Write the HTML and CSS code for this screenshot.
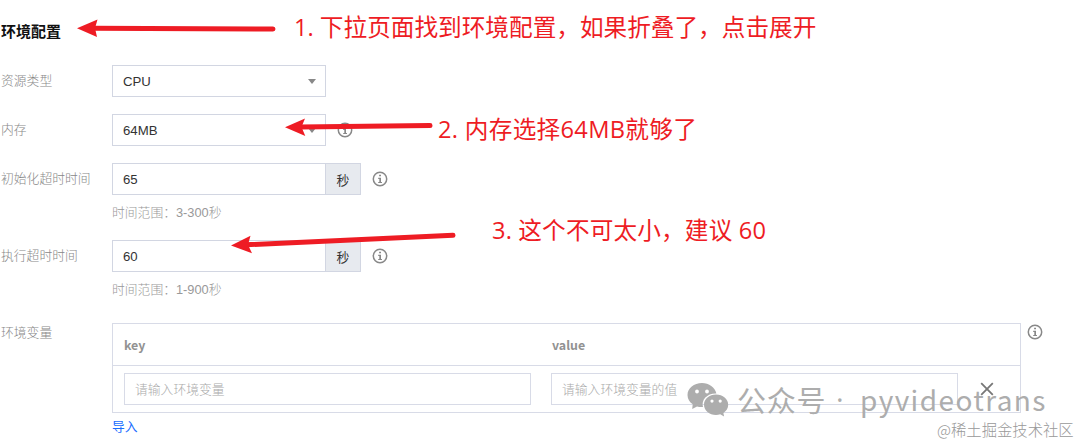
FILE: index.html
```html
<!DOCTYPE html>
<html lang="zh-CN">
<head>
    <meta charset="UTF-8">
    <meta name="viewport" content="width=device-width, initial-scale=1.0">
    <title>环境配置</title>
    <link rel="stylesheet" href="styles.css">
</head>
<body>
<svg class="defs" width="0" height="0">
    <symbol id="icon-info" viewBox="0 0 16 16">
        <circle cx="8" cy="8" r="6.7" fill="none" stroke="#888" stroke-width="1.5"/>
        <path d="M7.1 3.7h1.9v1.6H7.1zM6.2 6.7H9v4.2h1v1.2H6.2v-1.2h1.1V7.9H6.2z" fill="#888"/>
    </symbol>
</svg>

<main class="config">
    <h1>环境配置</h1>

    <div class="row">
        <label class="label">资源类型</label>
        <div class="select">CPU<span class="caret"></span></div>
    </div>

    <div class="row">
        <label class="label">内存</label>
        <div class="select">64MB<span class="caret"></span></div>
        <svg class="info"><use href="#icon-info"/></svg>
    </div>

    <div class="row with-hint">
        <label class="label">初始化超时时间</label>
        <div class="field">
            <div class="input-group">
                <div class="number">65</div>
                <div class="unit">秒</div>
                <svg class="info"><use href="#icon-info"/></svg>
            </div>
            <p class="hint">时间范围：3-300秒</p>
        </div>
    </div>

    <div class="row with-hint">
        <label class="label">执行超时时间</label>
        <div class="field">
            <div class="input-group">
                <div class="number">60</div>
                <div class="unit">秒</div>
                <svg class="info"><use href="#icon-info"/></svg>
            </div>
            <p class="hint">时间范围：1-900秒</p>
        </div>
    </div>

    <div class="row env">
        <label class="label">环境变量</label>
        <div class="field">
            <div class="table">
                <div class="table-head">
                    <span>key</span>
                    <span>value</span>
                </div>
                <div class="table-row">
                    <div class="env-input">请输入环境变量</div>
                    <div class="env-input">请输入环境变量的值</div>
                    <svg class="remove" viewBox="0 0 14 14">
                        <path d="M1.2 1.2l11.600 11.600M12.800 1.200l-11.600 11.600" fill="none" stroke="#777" stroke-width="1.8"/>
                    </svg>
                </div>
            </div>
            <a class="import">导入</a>
        </div>
        <svg class="info info-table"><use href="#icon-info"/></svg>
    </div>
</main>

<!-- Red arrows and notes over the form -->
<svg class="arrows" width="1080" height="444" viewBox="0 0 1080 444">
    <g stroke="#ee1c24" stroke-width="5" stroke-linecap="round">
        <path d="M93 28.3L273 29"/>
        <path d="M300 127L430 125.5"/>
        <path d="M246 244.8L453 235.3"/>
    </g>
    <g fill="#ee1c24">
        <path d="M77 28.2L97.500 19.500L95 28.300L97 37Z"/>
        <path d="M285 127.200L305 118.500L301.500 127L305.300 136Z"/>
        <path d="M231 245.500L250.500 235.800L248 244.800L252 253.300Z"/>
    </g>
</svg>
<p class="note note-1">1. 下拉页面找到环境配置，如果折叠了，点击展开</p>
<p class="note note-2">2. 内存选择64MB就够了</p>
<p class="note note-3">3. 这个不可太小，建议 60</p>

<div class="watermark">
    <svg class="wechat" width="42" height="35" viewBox="0 0 42 35">
        <path fill="#adadad" fill-rule="evenodd" d="M15 1C7 1 .5 6.300 .5 13c0 3.800 2 7.100 5.200 9.300L5.200 27l4.800-2.600c1.900.6 3.900.8 6 .6-2.100-7.500 4.500-14 13.400-13.600C28 5.300 22 1 15 1zM10 7.600a1.900 1.900 0 1 1 0 3.800a1.900 1.900 0 1 1 0-3.800zM20 7.600a1.900 1.900 0 1 1 0 3.800a1.900 1.900 0 1 1 0-3.800z"/>
        <path fill="#adadad" fill-rule="evenodd" d="M29 12.500c-6.700 0-12 4.500-12 10.200s5.300 10.200 12 10.200c1.500 0 2.900-.2 4.200-.6l3.900 2.100-.7-3.500c2.900-1.900 4.800-4.800 4.800-8.200 0-5.700-5.400-10.200-12.200-10.200zM25 17.500a1.600 1.600 0 1 1 0 3.200a1.600 1.600 0 1 1 0-3.200zM33.200 17.500a1.600 1.600 0 1 1 0 3.200a1.600 1.600 0 1 1 0-3.200z"/>
    </svg>
    <span class="watermark-label">公众号</span>
    <span class="watermark-dot">·</span>
    <span class="watermark-name">pyvideotrans</span>
</div>
<div class="community">@稀土掘金技术社区</div>
</body>
</html>
```
FILE: styles.css
```css
* {
    margin: 0;
    padding: 0;
    box-sizing: border-box;
}

body {
    position: relative;
    width: 1080px;
    height: 444px;
    overflow: hidden;
    background: #fff;
    color: #333;
    font-family: "Liberation Sans", "Noto Sans CJK SC", sans-serif;
    font-size: 12.8px;
}

.defs {
    position: absolute;
}

.config {
    padding-top: 21px;
}

h1 {
    height: 44px;
    padding-left: 1px;
    font-size: 15px;
    line-height: 21px;
    font-weight: 700;
    color: #111;
}

.row {
    display: flex;
    align-items: flex-start;
    height: 49px;
}

.row.with-hint {
    height: 77px;
}

.label {
    flex: none;
    width: 112px;
    padding-left: 1px;
    line-height: 31px;
    font-weight: 300;
    color: #888;
}

.select,
.number {
    width: 214px;
    height: 32px;
    padding: 0 10px;
    border: 1px solid #d2d6e2;
    font-size: 13.2px;
    line-height: 31px;
}

.select {
    display: flex;
    align-items: center;
    justify-content: space-between;
    padding-right: 9px;
}

.caret {
    border: 4px solid transparent;
    border-top: 5px solid #888;
    border-bottom: 0;
}

.input-group {
    display: flex;
}

.unit {
    width: 36px;
    height: 32px;
    margin-left: -1px;
    border: 1px solid #d2d6e2;
    background: #e7eaef;
    line-height: 33px;
    text-align: center;
}

.info {
    flex: none;
    width: 16px;
    height: 16px;
    margin: 8px 0 0 11px;
}

.info-table {
    margin: 1px 0 0 6px;
}

.hint {
    margin-top: 8px;
    line-height: 20px;
    font-weight: 300;
    color: #999;
}

.env {
    height: auto;
    margin-top: 6px;
}

.env .label {
    line-height: 20px;
}

.table {
    width: 909px;
    height: 90px;
    border: 1px solid #d8dbe7;
}

.table-head {
    display: grid;
    grid-template-columns: 428px 1fr;
    height: 42px;
    padding-left: 11px;
    border-bottom: 1px solid #d8dbe7;
    font-family: "Noto Sans CJK SC", sans-serif;
    font-size: 12.4px;
    font-weight: 700;
    line-height: 42px;
    color: #929292;
}

.table-row {
    display: flex;
    padding: 7px 0 0 11px;
}

.env-input {
    width: 407px;
    height: 32px;
    margin-right: 20px;
    padding-left: 10px;
    border: 1px solid #d8dbe7;
    font-weight: 300;
    line-height: 31px;
    color: #aaa;
}

.remove {
    width: 14px;
    height: 14px;
    margin: 9px 0 0 2px;
}

.import {
    display: block;
    margin-top: 4px;
    line-height: 20px;
    color: #1a6dff;
}

/* Notes */
.arrows {
    position: absolute;
    top: 0;
    left: 0;
}

.note {
    position: absolute;
    font-family: "Open Sans", "Noto Sans CJK SC", sans-serif;
    font-size: 23.65px;
    line-height: 34px;
    color: #ee1c24;
    white-space: pre;
}

.note-1 {
    top: 10px;
    left: 294px;
}

.note-2 {
    top: 112px;
    left: 438px;
    letter-spacing: 0.3px;
}

.note-3 {
    top: 213px;
    left: 492px;
    letter-spacing: 0.15px;
}

/* Watermarks */
.watermark {
    position: absolute;
    top: 379px;
    left: 687px;
    display: flex;
    font-family: "Noto Sans CJK SC", sans-serif;
    font-size: 29px;
    line-height: 40px;
    color: #adadad;
}

.wechat {
    margin-top: 3px;
}

.watermark-label {
    width: 96px;
    margin-left: 8px;
    letter-spacing: 0.8px;
}

.watermark-dot {
    width: 27px;
    font-family: "Open Sans", sans-serif;
    padding-left: 3px;
}

.watermark-name {
    font-size: 28px;
    letter-spacing: 1.4px;
}

.community {
    position: absolute;
    top: 418px;
    left: 937px;
    font-family: "Noto Sans CJK SC", sans-serif;
    font-size: 15.35px;
    font-weight: 300;
    line-height: 22px;
    color: #999;
}
```
